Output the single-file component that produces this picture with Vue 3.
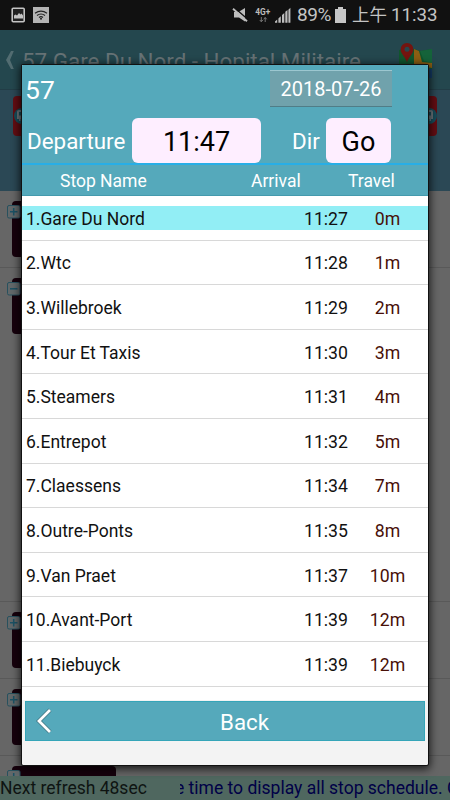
<template>
<div class="screen">
    <header class="status-bar">
        <svg class="status-left" width="60" height="30" viewBox="0 0 60 30">
            <rect x="12.2" y="8.2" width="12" height="13.6" rx="1" fill="#222" stroke="#c4c4c4" stroke-width="1.6"/>
            <path d="M14 18.5v-3l1.5-1 1.5 1 2-2.5 1.5 1.5 1-1 1.5 2v3z" fill="#c4c4c4"/>
            <rect x="33" y="7" width="16" height="16" fill="#b4b4b4"/>
            <path d="M35 13.3q6-4.4 12 0M37 15.5q4-3 8 0M39 17.4q2-1.5 4 0" fill="none" stroke="#222" stroke-width="1.2"/>
            <circle cx="41" cy="18.8" r="1" fill="#222"/>
        </svg>
        <div class="status-right">
            <svg width="63" height="30" viewBox="0 0 63 30">
                <path d="M2 12h4.500l6.500-4v13.500l-6-4H2z" fill="#bdbdbd"/>
                <path d="M2 7.500l14 12" stroke="#111" stroke-width="1.500"/>
                <path d="M1 8.800l14 12.500" stroke="#bdbdbd" stroke-width="1.900"/>
                <text x="23.3" y="15.2" class="net">4G+</text>
                <path d="M29.3 17v4.500M27.8 20l1.5 1.800 1.5-1.800M33.200 22v-4.500M31.700 19.300l1.5-1.800 1.5 1.800" fill="none" stroke="#777" stroke-width="1"/>
                <path d="M43 22.7v-1.2l2.2-2v3.2zM46.4 22.7v-4.3l2.4-2.2v6.5zM50 22.7v-7.8l2.3-2v9.8zM53.3 22.7v-11l2.2-1.6v12.6zM56.4 22.7V9.7l2-2v15z" fill="#bdbdbd"/>
            </svg>
            <span class="percent">{{ status.battery }}</span>
            <svg class="battery" width="11" height="16" viewBox="0 0 11 16">
                <path d="M0 2h3V0h5v2h3v14H0z" fill="#c6c6c6"/>
            </svg>
            <span class="period">{{ status.period }}</span>
            <span class="clock">{{ status.clock }}</span>
        </div>
    </header>
    <div class="title-bar">
        <svg class="title-back" width="11" height="20" viewBox="0 0 11 20">
            <path d="M6 1h2.8L5 10l3.8 9H6L1 10z" fill="#526c71"/>
        </svg>
        <h1>{{ route.no }} {{ route.name }}</h1>
        <svg class="map-icon" width="36" height="38" viewBox="0 0 36 38">
            <path d="M1 8l11-2 11 3 11-2v29H1z" fill="#10562d"/>
            <path d="M22 9l12-2v14l-8-2z" fill="#15633a"/>
            <path d="M16 7l5 2 3 11 10 1v5l-12-2-9 5-5-2 8-4z" fill="#8b5e13"/>
            <path d="M24 26l10 1v9H22z" fill="#143c68"/>
            <path d="M9 1a6.5 6.5 0 0 0-6.4 7C3 12 8 16 9 20.500c1-4.500 6-8.500 6.400-12.500A6.500 6.500 0 0 0 9 1z" fill="#74140f"/>
            <circle cx="9" cy="7.300" r="2.500" fill="#27464d"/>
        </svg>
    </div>
    <div class="bus-bar">
        <div class="bus-line">
            <svg v-for="n in 2" :key="n" width="40" height="40" viewBox="0 0 40 40">
                <rect width="40" height="40" rx="4" fill="#630d13"/>
                <circle :cx="n === 1 ? 9 : 32" cy="20" r="8" fill="#174c5a"/>
                <g :transform="n === 1 ? 'translate(4 14)' : 'translate(26 14)'">
                    <path d="M0 2q0-2 2-2h6q2 0 2 2v7H8v2H6.500V9h-3v2H2V9H0z" fill="#6b757c"/>
                    <path d="M2 2h6v3.500H2z" fill="#174c5a"/>
                </g>
            </svg>
        </div>
    </div>
    <main class="stops">
        <div v-for="(c, i) in cards" :key="i" class="card-row" :class="{ opened : c.opened }">
            <div class="card">
                <svg class="toggle" width="14" height="14" viewBox="0 0 14 14">
                    <rect x=".5" y=".5" width="12.500" height="12.500" rx="1.500" fill="#62686a" stroke="#28515e"/>
                    <path :d="c.opened ? 'M3 6.800h7.500' : 'M3 6.800h7.500M6.700 3v7.500'" stroke="#1c5265" stroke-width="1.500"/>
                </svg>
            </div>
        </div>
    </main>
    <footer class="notice">
        <span class="refresh">Next refresh 48sec</span>
        <div class="marquee"><span>e time to display all stop schedule. C</span></div>
    </footer>

    <section class="dialog">
        <div class="dialog-top">
            <span class="route-no">{{ route.no }}</span>
            <button class="date-btn">{{ route.date }}</button>
        </div>
        <div class="dialog-filter">
            <label class="dep-label">Departure</label>
            <button class="pick dep-time">{{ route.departure }}</button>
            <label class="dir-label">Dir</label>
            <button class="pick dir">Go</button>
        </div>
        <div class="table-head">
            <span class="th-name">Stop Name</span>
            <span class="th-arrival">Arrival</span>
            <span class="th-travel">Travel</span>
        </div>
        <ul class="stop-list">
            <li v-for="(s, i) in stops" :key="s.name">
                <div class="stop" :class="{ current : i === 0 }">
                    <span class="name">{{ i + 1 }}.{{ s.name }}</span>
                    <span class="arrival">{{ s.arrival }}</span>
                    <span class="travel">{{ s.travel }}m</span>
                </div>
            </li>
        </ul>
        <div class="dialog-bottom">
            <button class="back-btn">
                <svg width="18" height="28" viewBox="0 0 18 28">
                    <path d="M15 3L4 14l11 11" fill="none" stroke="#3f7480" stroke-width="4.200"/>
                    <path d="M15 3L4 14l11 11" fill="none" stroke="#fff" stroke-width="2.800"/>
                </svg>
                <span>Back</span>
            </button>
        </div>
    </section>
</div>
</template>
<script setup>
import { reactive } from 'vue';

const status = reactive({
    battery : '89%',
    period : '上午',
    clock : '11:33',
})
const route = reactive({
    no : '57',
    name : 'Gare Du Nord - Hopital Militaire',
    date : '2018-07-26',
    departure : '11:47',
})
const cards = reactive([
    { opened : false },
    { opened : true },
    { opened : false },
    { opened : false },
    { opened : false },
])
const stops = reactive([
    { name : 'Gare Du Nord', arrival : '11:27', travel : 0 },
    { name : 'Wtc', arrival : '11:28', travel : 1 },
    { name : 'Willebroek', arrival : '11:29', travel : 2 },
    { name : 'Tour Et Taxis', arrival : '11:30', travel : 3 },
    { name : 'Steamers', arrival : '11:31', travel : 4 },
    { name : 'Entrepot', arrival : '11:32', travel : 5 },
    { name : 'Claessens', arrival : '11:34', travel : 7 },
    { name : 'Outre-Ponts', arrival : '11:35', travel : 8 },
    { name : 'Van Praet', arrival : '11:37', travel : 10 },
    { name : 'Avant-Port', arrival : '11:39', travel : 12 },
    { name : 'Biebuyck', arrival : '11:39', travel : 12 },
])
</script>
<style>
    body {
        margin: 0;
        overflow: hidden;
    }
</style>
<style scoped>
    * {
        box-sizing: border-box;
    }
    .screen {
        position: relative;
        width: 450px;
        height: 800px;
        display: flex;
        flex-direction: column;
        overflow: hidden;
        background: #666;
        font-family: Roboto, "Noto Sans CJK TC", sans-serif;
        white-space: nowrap;
    }
    button {
        border: none;
        padding: 0;
        font-family: inherit;
    }
    svg {
        display: block;
        flex: none;
    }
    .status-bar {
        display: flex;
        justify-content: space-between;
        height: 30px;
        flex: none;
        background: #111;
        color: #c4c4c4;
    }
    .status-right {
        display: flex;
        align-items: center;
        width: 218px;
        font-size: 19px;
        line-height: 32px;
    }
    .net {
        font-size: 8.3px;
        font-weight: 700;
        fill: #bdbdbd;
    }
    .percent {
        width: 37px;
        margin-left: 2px;
        letter-spacing: -0.4px;
    }
    .battery {
        margin-left: 1px;
    }
    .period {
        width: 36px;
        margin-left: 6px;
        font-size: 17.5px;
    }
    .clock {
        margin-left: 3px;
        font-size: 18.7px;
    }
    .title-bar {
        display: flex;
        height: 60px;
        flex: none;
        background: #24474e;
        border-bottom: 1px solid #223d46;
    }
    .title-back {
        margin: 20px 0 0 5px;
    }
    .title-bar h1 {
        width: 376px;
        margin: 17px 0 0 6px;
        font-size: 22.4px;
        font-weight: 400;
        line-height: 28px;
        color: #667275;
    }
    .map-icon {
        margin-top: 12px;
    }
    .bus-bar {
        height: 101px;
        flex: none;
        padding: 6px 13px;
        background: #2b4855;
    }
    .bus-line {
        display: flex;
        justify-content: space-between;
    }
    .stops {
        flex: 1;
        overflow: hidden;
    }
    .card-row {
        height: 77px;
        padding: 10px 0 0 12px;
        border-bottom: 1px solid #595959;
    }
    .card-row.opened {
        height: 334px;
    }
    .card {
        width: 104px;
        height: 56px;
        border-radius: 4px;
        background: #16000c;
    }
    .toggle {
        position: relative;
        left: -5px;
        top: 4px;
    }
    .notice {
        display: flex;
        height: 24px;
        flex: none;
        font-size: 17.5px;
        line-height: 25px;
        background: #4f675f;
    }
    .refresh {
        width: 180px;
        color: #0e1412;
    }
    .marquee {
        display: flex;
        flex: 1;
        overflow: hidden;
        color: #000047;
    }
    .marquee span {
        margin-left: -5px;
    }
    .dialog {
        position: absolute;
        left: 22px;
        top: 65px;
        width: 406px;
        height: 700px;
        display: flex;
        flex-direction: column;
        overflow: hidden;
        border-radius: 1px 1px 2px 2px;
        background: #fff;
        box-shadow: 0 0 0 1px #111, 0 2px 9px 2px rgba(0, 0, 0, .75);
    }
    .dialog-top {
        display: flex;
        height: 53px;
        flex: none;
        background: #55a9bb;
        color: #fff;
    }
    .route-no {
        width: 248px;
        padding: 9px 0 0 3px;
        font-size: 26.5px;
        line-height: 32px;
    }
    .date-btn {
        width: 122px;
        height: 37px;
        margin-top: 5px;
        font-size: 20px;
        color: #fff;
        background: #70a2ac;
        border-top: 1px solid #9cc7d0;
        border-bottom: 1px solid #507d87;
    }
    .dialog-filter {
        display: flex;
        height: 47px;
        flex: none;
        font-size: 22.4px;
        line-height: 47px;
        color: #fff;
        background: #55a9bb;
        border-bottom: 2px solid #28aee6;
    }
    .dep-label {
        width: 110px;
        padding-left: 5px;
    }
    .pick {
        height: 45px;
        border-radius: 6px;
        font-size: 27px;
        line-height: 49px;
        color: #000;
        background: #feeeff;
    }
    .dep-time {
        width: 129px;
    }
    .dir-label {
        width: 65px;
        padding-left: 31px;
    }
    .dir {
        width: 65px;
    }
    .table-head {
        display: flex;
        height: 31px;
        flex: none;
        font-size: 17.5px;
        line-height: 33px;
        color: #fff;
        background: #55a9bb;
        border-bottom: 1px solid #449aad;
    }
    .th-name {
        width: 229px;
        padding-left: 38px;
    }
    .th-arrival {
        width: 97px;
    }
    .stop-list {
        height: 504px;
        margin: 0;
        padding: 0;
        list-style: none;
    }
    .stop-list li {
        display: flex;
        align-items: center;
        height: 44.6px;
        border-bottom: 1px solid #d8d8d8;
    }
    .stop {
        display: flex;
        width: 100%;
        height: 24px;
        font-size: 17.7px;
        line-height: 27px;
        color: #111;
    }
    .stop.current {
        background: #92eef5;
    }
    .name {
        width: 263px;
        padding-left: 4px;
        font-size: 17.5px;
    }
    .arrival {
        width: 63px;
        text-align: right;
    }
    .travel {
        width: 79px;
        text-align: center;
        color: #481008;
    }
    .dialog-bottom {
        height: 65px;
        flex: none;
        padding: 1px 3px 0;
        background: #f3f3f3;
    }
    .back-btn {
        display: flex;
        align-items: center;
        width: 100%;
        height: 40px;
        padding-left: 9px;
        font-size: 22.3px;
        color: #fff;
        background: #55a9bb;
        border: 1px solid #35a5b8;
    }
    .back-btn span {
        flex: 1;
        padding: 2px 0 0 12px;
        text-align: center;
    }
</style>
